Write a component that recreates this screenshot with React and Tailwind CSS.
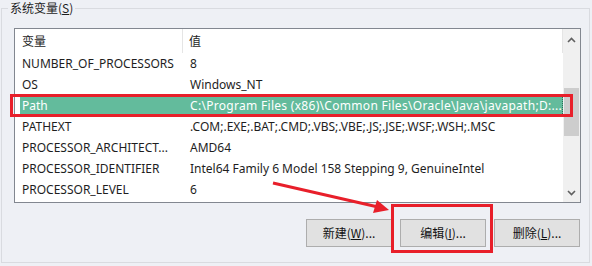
import React from 'react';

const rows = [
    { name: 'NUMBER_OF_PROCESSORS', value: '8' },
    { name: 'OS', value: 'Windows_NT' },
    { name: 'Path', value: 'C:\\Program Files (x86)\\Common Files\\Oracle\\Java\\javapath;D:...', selected: true },
    { name: 'PATHEXT', value: '.COM;.EXE;.BAT;.CMD;.VBS;.VBE;.JS;.JSE;.WSF;.WSH;.MSC' },
    { name: 'PROCESSOR_ARCHITECT...', value: 'AMD64' },
    { name: 'PROCESSOR_IDENTIFIER', value: 'Intel64 Family 6 Model 158 Stepping 9, GenuineIntel' },
    { name: 'PROCESSOR_LEVEL', value: '6' },
];

const Chevron = ({ up }) => (
    <svg width="9" height="6" viewBox="0 0 9 6">
        <path d={up ? 'M1 5 L4.5 1.5 L8 5' : 'M1 1 L4.5 4.5 L8 1'} fill="none" stroke="#606060" strokeWidth="1.6" />
    </svg>
);

const Button = ({ label, hotkey }) => (
    <button className="w-[86px] h-[28px] bg-[#e1e1e1] border border-[#adadad] text-[12px] text-[#111] flex items-center justify-center">
        {label}(<span className="underline">{hotkey}</span>)...
    </button>
);

const App = () => {
    return (
        <div className="relative w-[592px] h-[266px] bg-[#eef0f5] overflow-hidden text-[12px] text-[#1e1e1e]" style={{ fontFamily: '"Noto Sans", "Noto Sans CJK SC", sans-serif' }}>
            <div className="relative ml-[1px] mt-[8px] w-[589px] h-[255px] border border-[#d9dbe0] pt-[19px] pl-[12px]">
                <div className="absolute left-[6px] top-[-10px] px-[2px] bg-[#eef0f5] leading-[18px]" style={{ fontFamily: '"Noto Sans CJK SC", sans-serif' }}>
                    系统变量(<span className="underline">S</span>)
                </div>

                {/* list view */}
                <div className="w-[567px] h-[175px] border border-[#828790] bg-white flex">
                    <div className="flex-1 flex flex-col">
                        <div className="h-[24px] flex items-center">
                            <div className="w-[168px] h-full pl-[7px] flex items-center border-r border-[#e5e5e5]" style={{ fontFamily: '"Noto Sans CJK SC", sans-serif' }}>变量</div>
                            <div className="flex-1 h-full pl-[6px] flex items-center border-r border-[#e5e5e5]" style={{ fontFamily: '"Noto Sans CJK SC", sans-serif' }}>值</div>
                        </div>
                        {rows.map((r) => (
                            <div key={r.name} className="h-[21px] flex items-center">
                                {r.selected ? (
                                    <div className="ml-[5px] flex-1 h-full flex items-center bg-[#63bb9c] text-white border-r border-dotted border-[#2e6b56]">
                                        <div className="w-[163px] pl-[2px] whitespace-nowrap">{r.name}</div>
                                        <div className="flex-1 pl-[7px] whitespace-nowrap overflow-hidden tracking-[0.3px]">{r.value}</div>
                                    </div>
                                ) : (
                                    <>
                                        <div className="w-[168px] pl-[7px] whitespace-nowrap">{r.name}</div>
                                        <div className="flex-1 pl-[7px] whitespace-nowrap overflow-hidden">{r.value}</div>
                                    </>
                                )}
                            </div>
                        ))}
                    </div>
                    {/* scrollbar */}
                    <div className="w-[17px] bg-[#f0f0f0] flex flex-col items-center">
                        <div className="h-[17px] mt-[2px] flex items-center justify-center"><Chevron up /></div>
                        <div className="w-[15px] h-[48px] mt-[40px] bg-[#cdcdcd]" />
                        <div className="flex-1" />
                        <div className="h-[17px] mb-[1px] flex items-center justify-center"><Chevron /></div>
                    </div>
                </div>

                <div className="mt-[16px] flex justify-end gap-[8px] pr-[9px]" style={{ fontFamily: '"Noto Sans CJK SC", sans-serif' }}>
                    <Button label="新建" hotkey="W" />
                    <Button label="编辑" hotkey="I" />
                    <Button label="删除" hotkey="L" />
                </div>
            </div>

            {/* red annotations */}
            <div className="absolute left-[10px] top-[94px] w-[563px] h-[23px] border-[3px] border-[#e81f2a]" />
            <div className="absolute left-[391px] top-[204px] w-[102px] h-[49px] border-[3px] border-[#e81f2a]" />
            <svg className="absolute left-0 top-0" width="592" height="266">
                <line x1="273" y1="183" x2="378" y2="207" stroke="#e81f2a" strokeWidth="3" />
                <polygon points="389,210 373,213 377,200" fill="#e81f2a" />
            </svg>
        </div>
    );
};

export default App;
